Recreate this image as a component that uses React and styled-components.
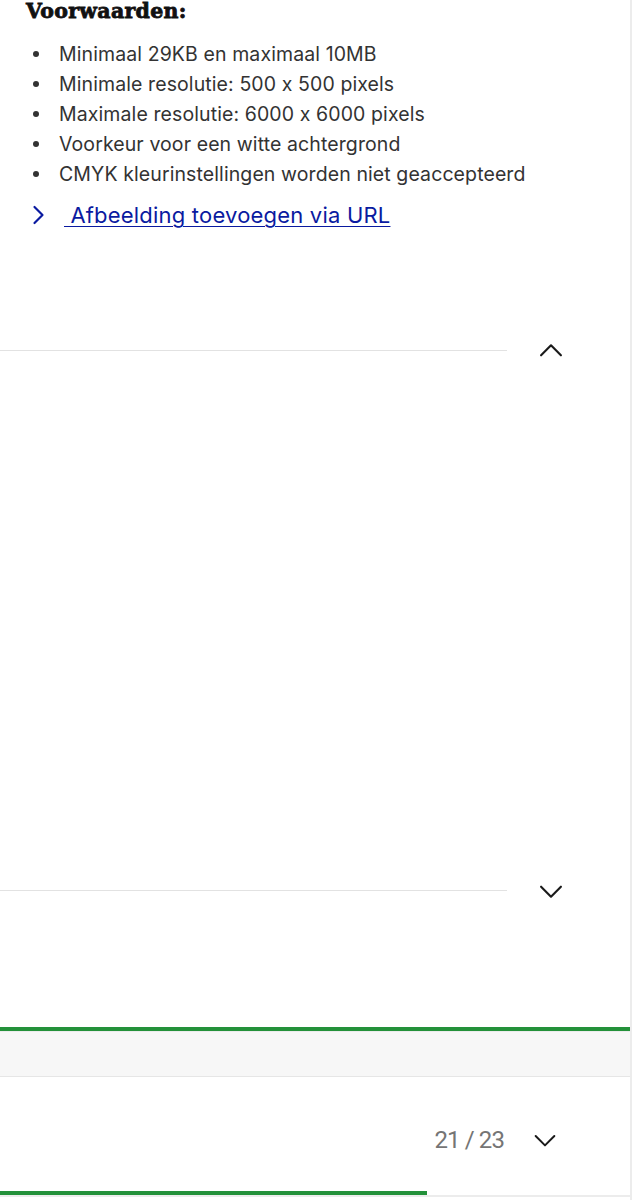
import React from "react";
import styled, { createGlobalStyle } from "styled-components";

const Global = createGlobalStyle`
  html, body { margin: 0; padding: 0; background: #fff; }
  body {
    font-family: "Inter", "Liberation Sans", sans-serif;
    font-feature-settings: "calt" 0;
  }
`;

const Panel = styled.div`
  width: 632px;
  box-sizing: border-box;
  border-right: 2px solid #ececec;
  min-height: 1200px;
  display: flex;
  flex-direction: column;
`;

const Conditions = styled.section`
  padding-left: 26px;
  height: 350px;
  box-sizing: border-box;
`;

const Heading = styled.h3`
  margin: 0;
  font-family: "DejaVu Serif", serif;
  font-weight: 700;
  font-size: 20.5px;
  line-height: 22px;
  color: #111;
  letter-spacing: 0.3px;
  -webkit-text-stroke: 0.8px #111;
`;

const List = styled.ul`
  margin: 17px 0 0;
  padding: 0;
  list-style: none;
`;

const Item = styled.li`
  display: flex;
  align-items: center;
  font-size: 19.5px;
  font-weight: 400;
  line-height: 30px;
  color: #333;
  letter-spacing: 0.1px;
  &::before {
    content: "";
    flex: 0 0 6px;
    height: 6px;
    border-radius: 50%;
    background: #333;
    margin: 0 20px 0 7px;
  }
`;

const LinkRow = styled.a`
  display: flex;
  align-items: center;
  margin-top: 13px;
  padding-left: 6px;
  color: #0a1aa0;
  font-size: 22px;
  line-height: 26px;
  letter-spacing: 0.2px;
  text-decoration: none;
  gap: 18px;
`;

const LinkText = styled.span`
  text-decoration: underline;
  text-underline-offset: 3px;
  text-decoration-thickness: 1px;
`;

const AccordionRow = styled.div`
  display: flex;
  align-items: center;
  height: 1px;
`;

const Rule = styled.div`
  flex: 0 0 507px;
  height: 1px;
  background: #e2e2e2;
`;

const ChevronBox = styled.div`
  width: 88px;
  display: flex;
  justify-content: center;
  align-items: center;
  color: #1a1a1a;
`;

const Spacer = styled.div`
  height: ${(p) => p.$h}px;
`;

const ProgressFill = styled.div`
  height: 4px;
  background: #23913a;
  width: ${(p) => p.$w};
`;

const BottomLine = styled.div`
  height: 2px;
  background: #ececec;
`;

const Band = styled.div`
  height: 44px;
  background: #f7f7f7;
  border-top: 1px solid #ececec;
  border-bottom: 1px solid #e6e6e6;
`;

const Footer = styled.div`
  height: 114px;
  display: flex;
  align-items: center;
  justify-content: flex-end;
  padding: 12px 69px 0 0;
  box-sizing: border-box;
  gap: 25px;
  color: #1a1a1a;
`;

const Counter = styled.span`
  font-family: "Roboto", sans-serif;
  font-size: 24px;
  color: #757575;
  letter-spacing: -0.9px;
`;

const Chevron = ({ dir = "down", size = 24, width = 1.8 }) => {
  const d = dir === "up" ? "M5 15l7-7 7 7" : "M5 9l7 7 7-7";
  return (
    <svg width={size} height={size} viewBox="0 0 24 24" fill="none">
      <path d={d} stroke="currentColor" strokeWidth={width} strokeLinecap="round" strokeLinejoin="round" />
    </svg>
  );
};

const LinkChevron = () => (
  <svg width="14" height="20" viewBox="0 0 14 20" fill="none">
    <path d="M2.5 2l8 8-8 8" stroke="currentColor" strokeWidth="2.2" strokeLinecap="round" strokeLinejoin="round" />
  </svg>
);

export default function App() {
  return (
    <>
      <Global />
      <Panel>
        <Conditions>
          <Heading>Voorwaarden:</Heading>
          <List>
            <Item>Minimaal 29KB en maximaal 10MB</Item>
            <Item>Minimale resolutie: 500 x 500 pixels</Item>
            <Item>Maximale resolutie: 6000 x 6000 pixels</Item>
            <Item>Voorkeur voor een witte achtergrond</Item>
            <Item>CMYK kleurinstellingen worden niet geaccepteerd</Item>
          </List>
          <LinkRow href="#">
            <LinkChevron />
            <LinkText>&nbsp;Afbeelding toevoegen via URL</LinkText>
          </LinkRow>
        </Conditions>
        <AccordionRow>
          <Rule />
          <ChevronBox>
            <Chevron dir="up" size={34} width={1.5} />
          </ChevronBox>
        </AccordionRow>
        <Spacer $h={539} />
        <AccordionRow>
          <Rule />
          <ChevronBox>
            <Chevron dir="down" size={34} width={1.5} />
          </ChevronBox>
        </AccordionRow>
        <Spacer $h={136} />
        <ProgressFill $w="100%" />
        <Band />
        <Footer>
          <Counter>21 / 23</Counter>
          <Chevron dir="down" size={32} width={1.5} />
        </Footer>
        <ProgressFill $w="427px" />
        <BottomLine />
      </Panel>
    </>
  );
}
